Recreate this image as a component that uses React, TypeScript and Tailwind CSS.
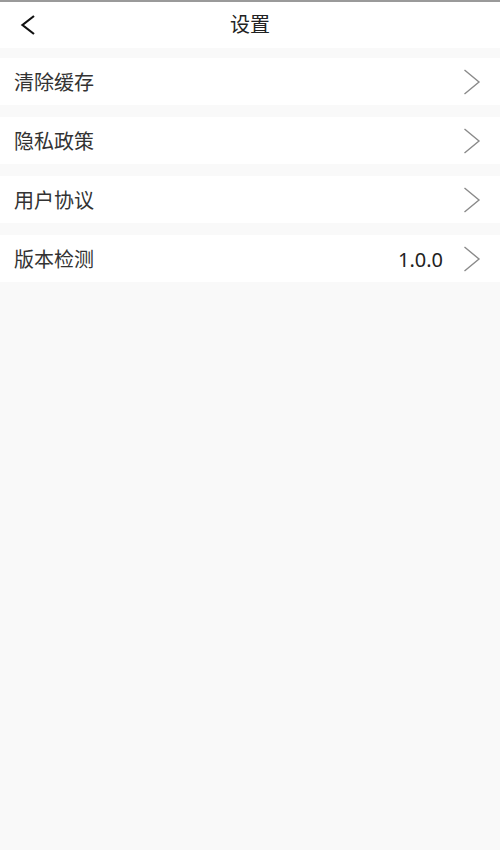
import React from "react";

const Chevron = () => (
  <svg width="18" height="28" viewBox="0 0 18 28" className="shrink-0">
    <path d="M1.5 2 L16 14 L1.5 26" fill="none" stroke="#8a8a8a" strokeWidth="1.4" />
  </svg>
);

const Row = ({ label, value }: { label: string; value?: string }) => (
  <div className="flex items-center h-[47px] bg-white pl-[14px] pr-[19px]">
    <span className="flex-1 text-[20px] text-[#333333] pt-[3px]">{label}</span>
    {value && <span className="text-[20px] text-[#222222] mr-[20px] pt-[3px]">{value}</span>}
    <Chevron />
  </div>
);

export default function App() {
  return (
    <div
      className="w-[500px] h-[850px] bg-[#f9f9f9] flex flex-col"
      style={{ fontFamily: '"Noto Sans", "Noto Sans CJK SC", sans-serif' }}
    >
      <div className="h-[48px] bg-white border-t-2 border-[#9a9a9a] flex items-center relative">
        <div className="absolute left-[19px] top-[10px]">
          <svg width="18" height="26" viewBox="0 0 18 26">
            <path d="M15 4 L3.5 13 L15 22" fill="none" stroke="#111" strokeWidth="2.2" />
          </svg>
        </div>
        <div className="flex-1 text-center text-[20px] text-[#222222]">设置</div>
      </div>
      <div className="flex flex-col gap-[12px] mt-[10px]">
        <Row label="清除缓存" />
        <Row label="隐私政策" />
        <Row label="用户协议" />
        <Row label="版本检测" value="1.0.0" />
      </div>
    </div>
  );
}
